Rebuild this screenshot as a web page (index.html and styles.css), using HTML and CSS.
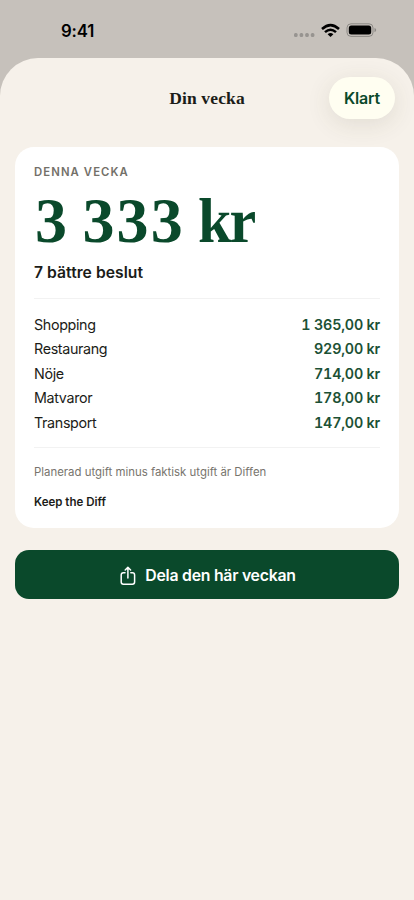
FILE: index.html
```html
<!DOCTYPE html>
<html lang="sv">
<head>
<meta charset="utf-8">
<meta name="viewport" content="width=device-width, initial-scale=1">
<title>Din vecka</title>
<link rel="stylesheet" href="styles.css">
</head>
<body>
<div class="status">
  <span class="time">9:41</span>
  <svg class="indicators" width="84" height="16" viewBox="0 0 84 16">
    <g fill="#979490"><rect x="1" y="10" width="3.6" height="4" rx="1.5"/><rect x="6.6" y="10" width="3.6" height="4" rx="1.5"/><rect x="12.2" y="10" width="3.6" height="4" rx="1.5"/><rect x="17.8" y="10" width="3.6" height="4" rx="1.5"/></g>
    <g fill="none" stroke="#000" stroke-width="2.5"><path d="M29 6Q37.5-1.8 46 6"/><path d="M32 9.2Q37.5 4.2 43 9.2"/></g>
    <path d="M34.6 11.2Q37.5 8.8 40.4 11.2L37.5 14Z"/>
    <rect x="54" y=".8" width="26" height="12.6" rx="4" fill="none" stroke="#8c8985"/>
    <rect x="55.8" y="2.6" width="22.4" height="9" rx="2.5"/>
    <path d="M81.5 5Q83.2 5.6 83.2 7.1T81.5 9.2Z" fill="#8c8985"/>
  </svg>
</div>
<main class="sheet">
  <header class="header">
    <h1 class="title">Din vecka</h1>
    <button class="done">Klart</button>
  </header>
  <section class="card">
    <div class="eyebrow">DENNA VECKA</div>
    <div class="amount">3 333 <span class="unit">kr</span></div>
    <div class="decisions">7 bättre beslut</div>
    <dl class="list">
      <div class="row"><dt>Shopping</dt><dd>1 365,00 kr</dd></div>
      <div class="row"><dt>Restaurang</dt><dd>929,00 kr</dd></div>
      <div class="row"><dt>Nöje</dt><dd>714,00 kr</dd></div>
      <div class="row"><dt>Matvaror</dt><dd>178,00 kr</dd></div>
      <div class="row"><dt>Transport</dt><dd>147,00 kr</dd></div>
    </dl>
    <p class="note">Planerad utgift minus faktisk utgift är Diffen</p>
    <p class="brand">Keep the Diff</p>
  </section>
  <button class="share">
    <svg width="16" height="20" viewBox="0 0 16 20" fill="none" stroke="#fff" stroke-width="1.5" stroke-linecap="round" stroke-linejoin="round"><path d="M5 6.8H3.4Q1.2 6.8 1.2 9V16Q1.2 18.2 3.4 18.2H12.4Q14.6 18.2 14.6 16V9Q14.6 6.8 12.4 6.8H10.8M7.9 12V1.4M5.2 4L7.9 1.3L10.6 4"/></svg>
    <span class="share-label">Dela den här veckan</span>
  </button>
</main>
</body>
</html>
```
FILE: styles.css
```css
* { box-sizing: border-box; }
body { margin: 0; height: 900px; overflow: hidden; background: #c6c1bb; font-family: Inter, sans-serif; color: #1b1c18; white-space: nowrap; }
h1, p, dl, dt, dd { margin: 0; }
button { border: 0; padding: 0; font-family: inherit; }
.status { height: 58px; display: flex; justify-content: space-between; padding: 19px 37px 0 61px; }
.time { font-size: 16.8px; line-height: 24px; font-weight: 600; letter-spacing: -0.2px; color: #000; }
.indicators { margin-top: 4px; }
.sheet { height: 842px; background: #f6f1ea; border-radius: 38px 38px 0 0; padding: 0 15px; overflow: hidden; }
.header { height: 89px; display: grid; grid-template-columns: 1fr auto 1fr; align-items: start; padding: 19px 4px 0; }
.title { grid-column: 2; font-family: "Liberation Serif", serif; font-size: 17.5px; font-weight: 700; line-height: 43px; letter-spacing: 0.15px; }
.done { justify-self: end; width: 66px; height: 42px; border-radius: 21px; background: #fffef1; color: #0a492b; font-size: 16px; font-weight: 600; letter-spacing: -0.15px; box-shadow: 0 5px 24px rgba(75, 70, 45, .12); }
.card { height: 381px; background: #fff; border-radius: 19px; padding: 17px 19px 18px; }
.eyebrow { font-size: 11.3px; line-height: 16px; font-weight: 600; letter-spacing: 1.1px; color: #737069; }
.amount { font-family: "Liberation Serif", serif; font-size: 64px; font-weight: 700; line-height: 82px; letter-spacing: 2.2px; word-spacing: -5px; color: #0a492b; height: 77px; padding-left: 1px; }
.unit { display: inline-block; letter-spacing: -2px; transform: scaleX(.94); transform-origin: left; }
.decisions { font-size: 15.7px; line-height: 24px; height: 22px; margin-top: 4px; font-weight: 600; letter-spacing: 0.03px; }
.list { margin-top: 15px; border: solid #f2f2f2; border-width: 1px 0; padding: 14px 0 12px; height: 150px; }
.row { display: flex; justify-content: space-between; font-size: 14.3px; line-height: 24.4px; letter-spacing: -0.35px; }
.row dd { font-weight: 600; color: #1c5135; font-variant-numeric: tabular-nums; letter-spacing: -0.2px; }
.note { margin-top: 16px; font-size: 11.4px; line-height: 16px; color: #77746d; }
.brand { margin-top: 14px; font-size: 11.5px; line-height: 17px; font-weight: 600; }
.share { display: flex; align-items: center; justify-content: center; width: 100%; height: 49px; margin-top: 22px; padding: 2px 0 0 2px; border-radius: 14px; background: #0a492b; color: #fff; gap: 9px; }
.share-label { font-size: 15.8px; line-height: 24px; font-weight: 600; letter-spacing: -0.25px; padding-top: 1px; }
```
